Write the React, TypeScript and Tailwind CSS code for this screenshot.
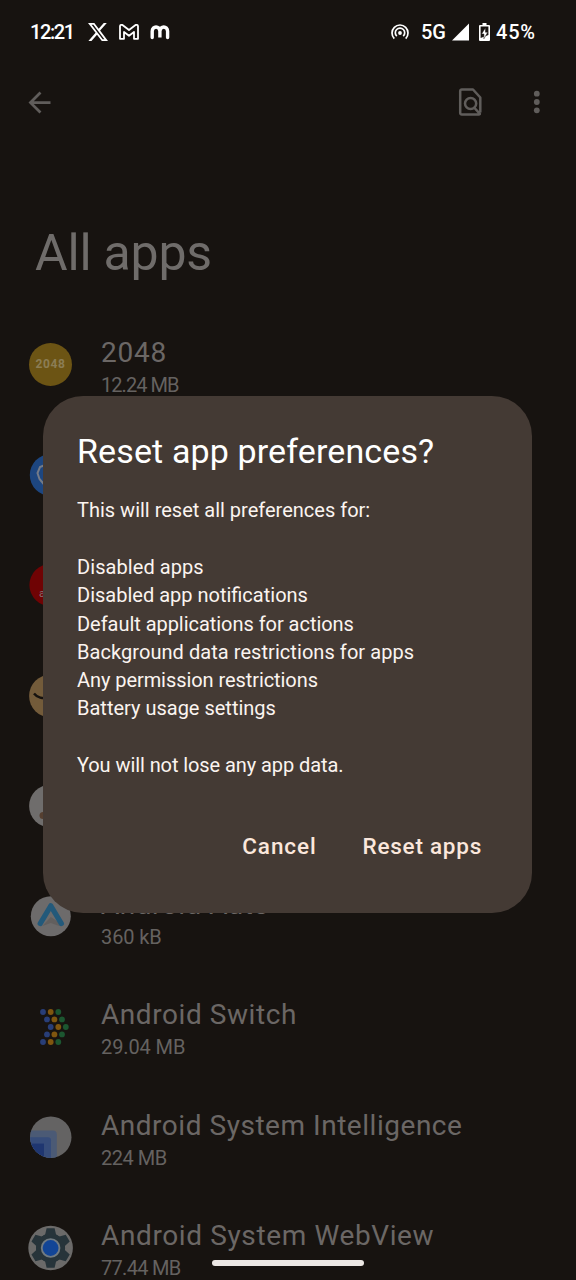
import type { ReactNode } from 'react';

interface AppEntry {
  id: string;
  name?: string;
  nameClass?: string;
  size?: string;
  sizeClass?: string;
  icon: ReactNode;
}

const switchDots: [number, number, number][] = [
  [16, 9, 0], [23.7, 9, 1], [31.3, 9, 2],
  [20, 16.4, 0], [27.4, 16.4, 1], [35, 16.4, 2],
  [23.7, 24, 0], [31.3, 24, 1], [38.8, 24, 2],
  [20, 31.4, 0], [27.4, 31.4, 1], [35, 31.4, 2],
  [16, 39, 0], [23.7, 39, 1], [31.3, 39, 2],
];
const dotColors = ['#283e78', '#80560f', '#1c5630'];

function IconFrame({ children }: { children: ReactNode }) {
  return (
    <svg className="size-12 shrink-0" viewBox="0 0 48 48" fill="none">
      {children}
    </svg>
  );
}

const apps: AppEntry[] = [
  {
    id: '2048',
    name: '2048',
    nameClass: 'tracking-[0.8px]',
    size: '12.24 MB',
    sizeClass: 'tracking-[-0.95px]',
    icon: (
      <div className="flex size-12 shrink-0 items-center justify-start pl-[2px]">
        <div className="flex size-[43px] items-center justify-center rounded-full bg-[#6c5414] text-[12px] font-bold tracking-[0.6px] text-[#8b7d55]">
          2048
        </div>
      </div>
    ),
  },
  {
    id: 'blue',
    icon: (
      <IconFrame>
        <circle cx="23.6" cy="24" r="20.8" fill="#1d4680" />
        <path d="M18 14l-5 2-2.5 6 2 6 5 6" stroke="#747b88" strokeWidth="2" />
      </IconFrame>
    ),
  },
  {
    id: 'red',
    icon: (
      <IconFrame>
        <circle cx="23.6" cy="24" r="21.2" fill="#6f0304" />
        <text x="12" y="36" fontSize="11" fill="#877070">
          a
        </text>
      </IconFrame>
    ),
  },
  {
    id: 'tan',
    icon: (
      <IconFrame>
        <circle cx="23.6" cy="24" r="21.5" fill="#735b3a" />
        <path d="M7 21.5c3 4 9 5.5 14 4" stroke="#15110e" strokeWidth="2.4" />
      </IconFrame>
    ),
  },
  {
    id: 'white',
    icon: (
      <IconFrame>
        <circle cx="23.6" cy="24" r="21.5" fill="#6f6d6c" />
        <circle cx="16" cy="33.5" r="3.5" fill="#553f30" />
      </IconFrame>
    ),
  },
  {
    id: 'auto',
    name: 'Android Auto',
    nameClass: 'tracking-[0.5px]',
    size: '360 kB',
    icon: (
      <IconFrame>
        <circle cx="23.8" cy="24.2" r="20" fill="#6d6b6b" />
        <path d="M23.8 25l11.5 7.5-3 1.5-8.5-3-8.5 3z" fill="#625f5e" />
        <path d="M13.2 31.6l10.6-17.8 10.6 17.8" stroke="#23597a" strokeWidth="5.2" strokeLinejoin="round" strokeLinecap="round" />
      </IconFrame>
    ),
  },
  {
    id: 'switch',
    name: 'Android Switch',
    nameClass: 'tracking-[0.57px]',
    size: '29.04 MB',
    icon: (
      <IconFrame>
        {switchDots.map(([cx, cy, c]) => (
          <circle key={`${cx}-${cy}`} cx={cx} cy={cy} r="2.9" fill={dotColors[c]} />
        ))}
      </IconFrame>
    ),
  },
  {
    id: 'intelligence',
    name: 'Android System Intelligence',
    nameClass: 'tracking-[0.53px]',
    size: '224 MB',
    sizeClass: 'tracking-[-0.5px]',
    icon: (
      <IconFrame>
        <clipPath id="asi">
          <circle cx="23.8" cy="24.2" r="20.7" />
        </clipPath>
        <g clipPath="url(#asi)">
          <rect width="48" height="48" fill="#646363" />
          <rect x="-10" y="17.6" width="39.8" height="40" rx="4" fill="#4b5a75" />
          <rect x="-10" y="24.2" width="34" height="40" rx="3" fill="#364c7a" />
          <rect x="-10" y="30.6" width="27" height="40" fill="#1f3670" />
        </g>
      </IconFrame>
    ),
  },
  {
    id: 'webview',
    name: 'Android System WebView',
    nameClass: 'tracking-[0.62px]',
    size: '77.44 MB',
    sizeClass: 'tracking-[-0.7px]',
    icon: (
      <IconFrame>
        <circle cx="23.6" cy="24" r="22.3" fill="#6b6a69" />
        <g fill="#27343a">
          <circle cx="23.6" cy="24" r="14.5" />
          {[0, 60, 120].map((angle) => (
            <path
              key={angle}
              transform={`rotate(${angle} 23.6 24)`}
              d="M19.6 4.2h8l1.5 6.5 3 2v22.6l-3 2-1.5 6.5h-8l-1.5-6.5-3-2V12.7l3-2z"
            />
          ))}
        </g>
        <circle cx="23.6" cy="24" r="9.8" fill="#717b82" />
        <circle cx="23.6" cy="24" r="7.9" fill="#124596" />
      </IconFrame>
    ),
  },
];

function StatusBar() {
  return (
    <div className="flex h-16 items-center justify-between pl-[30px] pr-[39px] text-[20px] font-medium text-white">
      <div className="flex items-center">
        <span className="w-[58px] tracking-[-1.4px]">12:21</span>
        <svg className="size-[20px]" viewBox="0 0 24 24" fill="currentColor">
          <path d="M18.901 1.153h3.68l-8.04 9.19L24 22.846h-7.406l-5.8-7.584-6.638 7.584H.474l8.6-9.83L0 1.154h7.594l5.243 6.932ZM17.61 20.644h2.039L6.486 3.24H4.298Z" />
        </svg>
        <svg className="ml-[11px] h-4 w-5" viewBox="0 0 20 16" fill="none" stroke="currentColor" strokeWidth="1.8" strokeLinejoin="round">
          <path d="M1 14.8V2.3C1 .7 2.8.4 3.8 1.2L10 6l6.2-4.8c1-.8 2.8-.5 2.8 1.1v12.5h-4V8l-5 3.8L5 8v6.8z" />
        </svg>
        <svg className="ml-[11px] h-4 w-5" viewBox="0 0 20 16" fill="none" stroke="currentColor" strokeWidth="3.4" strokeLinecap="round">
          <path d="M2.2 13.5V7.2c0-5.6 7.7-5.6 7.7 0v6.3V7.2c0-5.6 7.7-5.6 7.7 0v6.3" />
        </svg>
      </div>
      <div className="flex items-center">
        <svg className="h-5 w-5" viewBox="0 0 20 20" fill="none" stroke="currentColor" strokeWidth="1.7">
          <path d="M4.3 16.6a8 8 0 1 1 11.4 0" />
          <path d="M6.8 14.2a4.7 4.7 0 1 1 6.4 0" />
          <circle cx="10" cy="11" r="1.9" fill="currentColor" stroke="none" />
        </svg>
        <span className="ml-[11px] w-[28px]">5G</span>
        <svg className="ml-[3px] h-[18px] w-[17px]" viewBox="0 0 17 18" fill="currentColor">
          <path d="M17 .5V17.5H0z" />
        </svg>
        <svg className="ml-[10px] h-[18px] w-[11px]" viewBox="0 0 11 18" fill="none">
          <path d="M3.5 0h4v2H10a1 1 0 0 1 1 1v14a1 1 0 0 1-1 1H1a1 1 0 0 1-1-1V3a1 1 0 0 1 1-1h2.5z" fill="currentColor" />
          <path d="M1.6 3.6h7.8v8.4l-7.8 3z" fill="#171310" />
          <path d="M6.5 4.8L2.5 11h2.4v4.8L8.8 9.2H6.5z" fill="currentColor" stroke="#171310" strokeWidth="0.5" />
        </svg>
        <span className="ml-[6px] w-[41px] tracking-[0.8px]">45%</span>
      </div>
    </div>
  );
}

function Toolbar() {
  return (
    <div className="flex h-[76px] items-center justify-between pl-[23px] pr-[30px] text-[#605d5b]">
      <svg className="size-[33px]" viewBox="0 0 24 24" fill="currentColor">
        <path d="M20 11H7.83l5.59-5.59L12 4l-8 8 8 8 1.41-1.41L7.83 13H20z" />
      </svg>
      <div className="flex items-center gap-[44px]">
        <svg className="h-7 w-6" viewBox="0 0 24 28" fill="none" stroke="currentColor" strokeWidth="2.5" strokeLinejoin="round">
          <path d="M22.3 24.5V9.5L15 1.500H3.700a1.500 1.500 0 0 0-1.500 1.500v22a1.500 1.500 0 0 0 1.500 1.500h17a1.500 1.500 0 0 0 1.200-.6l-5.800-6.400" />
          <circle cx="12.6" cy="15.5" r="5.6" />
        </svg>
        <svg className="h-7 w-[20px]" viewBox="0 0 20 28" fill="currentColor">
          <circle cx="10.8" cy="5.7" r="2.9" />
          <circle cx="10.8" cy="14" r="2.9" />
          <circle cx="10.8" cy="22.3" r="2.9" />
        </svg>
      </div>
    </div>
  );
}

function AppRow({ app }: { app: AppEntry }) {
  return (
    <li className="flex h-[110.45px] shrink-0 items-center gap-[26px] pl-[27px]">
      {app.icon}
      {app.name && (
        <div className="flex flex-col gap-[2px] pt-[5px]">
          <span className={`text-[28px] leading-[34px] text-[#6b6765] ${app.nameClass ?? ''}`}>{app.name}</span>
          <span className={`text-[20px] leading-[26px] text-[#656260] ${app.sizeClass ?? 'tracking-[-0.1px]'}`}>
            {app.size}
          </span>
        </div>
      )}
    </li>
  );
}

const resetItems = [
  { text: 'Disabled apps', className: 'tracking-[0.07px]' },
  { text: 'Disabled app notifications', className: '' },
  { text: 'Default applications for actions', className: 'tracking-[-0.04px]' },
  { text: 'Background data restrictions for apps', className: 'tracking-[0.06px]' },
  { text: 'Any permission restrictions', className: 'tracking-[-0.07px]' },
  { text: 'Battery usage settings', className: '' },
];

function ResetDialog() {
  return (
    <div
      role="dialog"
      className="absolute left-[43px] top-[396px] h-[517px] w-[489px] rounded-[40px] bg-[#443a34] pl-[34px] pr-[50px] pt-[34px] text-[#fbf4f0]"
    >
      <h2 className="text-[34px] leading-[42px] tracking-[0.13px] text-white">Reset app preferences?</h2>
      <div className="mt-[24.4px] text-[20px] leading-[28.3px]">
        <p>This will reset all preferences for:</p>
        <ul className="my-[28.3px]">
          {resetItems.map((item) => (
            <li key={item.text} className={item.className}>
              {item.text}
            </li>
          ))}
        </ul>
        <p className="tracking-[-0.08px]">You will not lose any app data.</p>
      </div>
      <div className="mt-[53px] flex justify-end gap-[46px] text-[22.5px] font-medium leading-7 text-[#fbe7dc]">
        <button className="tracking-[0.9px]">Cancel</button>
        <button className="tracking-[0.75px]">Reset apps</button>
      </div>
    </div>
  );
}

export default function App() {
  return (
    <div className="relative h-[1280px] w-[576px] overflow-hidden bg-[#171310] font-[Roboto,sans-serif]">
      <StatusBar />
      <Toolbar />
      <h1 className="mt-[83px] pl-[35px] text-[50px] leading-[60px] tracking-[-0.2px] text-[#6f6c6a]">All apps</h1>
      <ul className="mt-[26px] flex flex-col">
        {apps.map((app) => (
          <AppRow key={app.id} app={app} />
        ))}
      </ul>

      <ResetDialog />

      {/* Gesture navigation handle */}
      <div className="absolute left-[212px] top-[1260px] h-[6px] w-[152px] rounded-full bg-[#ece7e4]" />
    </div>
  );
}
